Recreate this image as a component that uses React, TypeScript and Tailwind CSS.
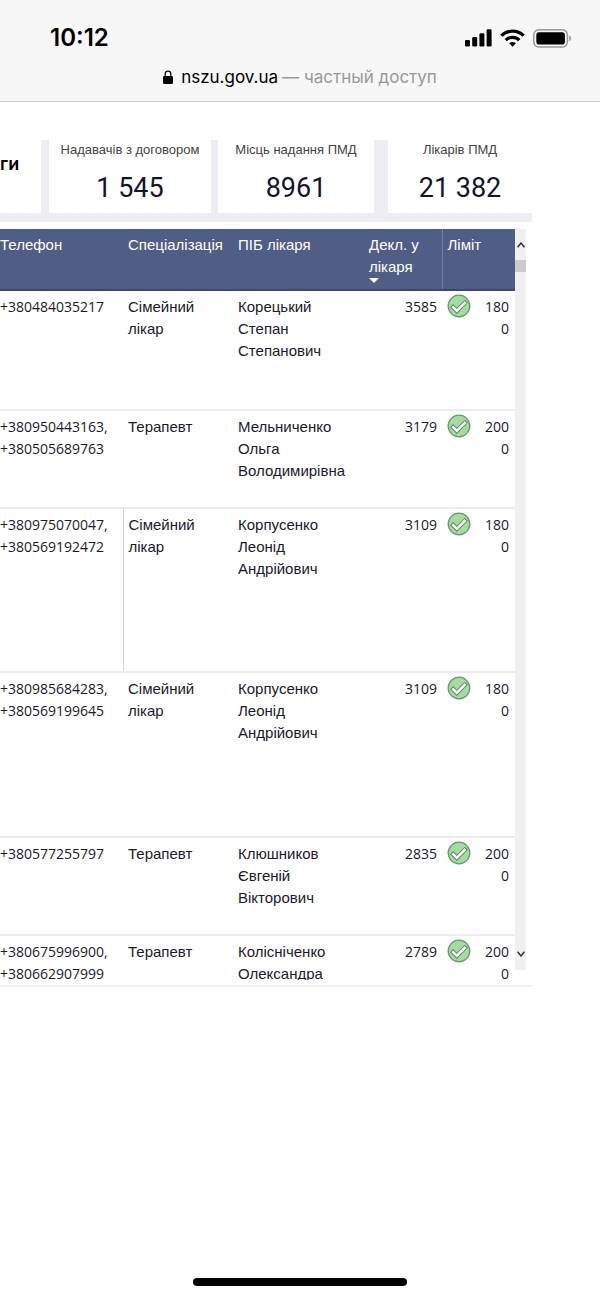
import { clsx } from 'clsx'

const STATS = [
  { label: 'Надавачів з договором', value: '1 545', width: 'w-[162px]', gap: 'mr-[7px]' },
  { label: 'Місць надання ПМД', value: '8961', width: 'w-[156px]', gap: 'mr-[14px]' },
  { label: 'Лікарів ПМД', value: '21 382', width: 'flex-1', gap: '' }
]

const DOCTORS = [
  { phones: ['+380484035217'], spec: 'Сімейний лікар', name: ['Корецький', 'Степан', 'Степанович'], count: 3585, limit: 1800, height: 'h-[120px]' },
  { phones: ['+380950443163,', '+380505689763'], spec: 'Терапевт', name: ['Мельниченко', 'Ольга', 'Володимирівна'], count: 3179, limit: 2000, height: 'h-[98px]' },
  { phones: ['+380975070047,', '+380569192472'], spec: 'Сімейний лікар', name: ['Корпусенко', 'Леонід', 'Андрійович'], count: 3109, limit: 1800, height: 'h-[164px]', divided: true },
  { phones: ['+380985684283,', '+380569199645'], spec: 'Сімейний лікар', name: ['Корпусенко', 'Леонід', 'Андрійович'], count: 3109, limit: 1800, height: 'h-[165px]' },
  { phones: ['+380577255797'], spec: 'Терапевт', name: ['Клюшников', 'Євгеній', 'Вікторович'], count: 2835, limit: 2000, height: 'h-[98px]' },
  { phones: ['+380675996900,', '+380662907999'], spec: 'Терапевт', name: ['Колісніченко', 'Олександра'], count: 2789, limit: 2000, height: 'h-[98px]' }
]

function CheckBadge() {
  return (
    <svg viewBox="0 0 24 24" className="w-6 h-6 shrink-0 -mt-0.5" aria-hidden="true">
      <circle cx="12" cy="12" r="10.8" fill="#a5dba3" stroke="#659b67" strokeWidth="1.3" />
      <path d="M4.6 11.6l5.2 5.2 9.6-9.6" fill="none" stroke="#568b5a" strokeWidth="4.4" />
      <path d="M5.4 12.4l4.4 4.4 8.8-8.8" fill="none" stroke="#fff" strokeWidth="2.5" />
    </svg>
  )
}

function StatusIcons() {
  return (
    <div className="flex items-center gap-2">
      <svg viewBox="0 0 27 18" className="w-[27px] h-[18px]">
        <rect x="0" y="11" width="5" height="6.5" rx="1.3" />
        <rect x="7.2" y="8" width="5" height="9.5" rx="1.3" />
        <rect x="14.4" y="4.2" width="5" height="13.3" rx="1.3" />
        <rect x="21.6" y="0.2" width="5" height="17.3" rx="1.3" />
      </svg>
      <svg viewBox="0 0 25 18" className="w-[25px] h-[18px]" fill="none" stroke="#000" strokeWidth="3.2">
        <path d="M1.4 6.7a16 16 0 0 1 22.2 0" />
        <path d="M5.7 11.1a9.8 9.8 0 0 1 13.6 0" />
        <path d="M12.5 17.8l-3.4-3.5a4.9 4.9 0 0 1 6.8 0z" fill="#000" stroke="none" />
      </svg>
      <svg viewBox="0 0 39 19" className="w-[39px] h-[19px]">
        <rect x="0.8" y="0.8" width="33.6" height="17.2" rx="5" fill="none" stroke="#999" strokeWidth="1.5" />
        <rect x="3.3" y="3.2" width="28.6" height="12.4" rx="2.8" />
        <path d="M36.2 6.6c2.6.8 2.6 4.8 0 5.6z" fill="#999" />
      </svg>
    </div>
  )
}

export default function App() {
  return (
    <div className="min-h-screen flex flex-col bg-white overflow-hidden font-['Liberation_Sans',sans-serif] text-[#1a1a2b]">
      {/* Phone status bar and address */}
      <header className="bg-[#f7f7f7] border-b border-[#cfcfcf] text-black">
        <div className="h-16 pt-3 pl-[50px] pr-7 flex items-center justify-between">
          <span className="font-['Inter',sans-serif] text-[24px] leading-8 font-semibold">10:12</span>
          <StatusIcons />
        </div>
        <a href="#" className="h-[37px] pb-3 flex items-center justify-center font-['Inter',sans-serif] text-[17px] leading-6">
          <svg viewBox="0 0 10 14" className="w-[10px] h-[14px] mr-2">
            <path d="M2.2 7V4a2.8 2.8 0 0 1 5.6 0v3" fill="none" stroke="#000" strokeWidth="1.3" />
            <rect y="6" width="10" height="8" rx="1.2" />
          </svg>
          nszu.gov.ua
          <span className="ml-1 text-[#999]">— частный доступ</span>
        </a>
      </header>

      <main className="mt-[38px] mr-[68px] border-b-2 border-[#f0f0f0] pb-[5px]">
        {/* Totals */}
        <section className="bg-[#ededf3] h-[82px] pb-[9px] flex">
          <div className="w-[41px] mr-2 bg-white pt-3 font-['Inter',sans-serif] text-[18px] leading-6 font-semibold text-black">ги</div>
          {STATS.map((stat) => (
            <div key={stat.label} className={clsx('bg-white text-center whitespace-nowrap', stat.width, stat.gap)}>
              <div className="text-[13px] leading-5 text-[#444]">{stat.label}</div>
              <div className="mt-3 font-['Roboto',sans-serif] text-[27px] leading-8 text-[#14142b]">{stat.value}</div>
            </div>
          ))}
        </section>

        {/* Doctors */}
        <section className="mt-[7px] mr-[6px] flex h-[751px]">
          <div className="flex-1 overflow-hidden">
            <table className="w-full table-fixed border-collapse text-[15px] leading-[22px]">
              <thead className="bg-[#505d86] text-white text-left align-top">
                <tr className="h-[61px] border-b-2 border-[#3f466b] align-top">
                  <th className="w-[123px] pt-[5px] font-normal">Телефон</th>
                  <th className="w-[110px] pt-[5px] pl-[5px] font-normal">Спеціалізація</th>
                  <th className="pt-[5px] pl-[5px] font-normal">ПІБ лікаря</th>
                  <th className="w-[78px] pt-[5px] pl-[5px] font-normal border-r border-r-[#7680a3]">
                    Декл. у лікаря
                    <svg viewBox="0 0 10 5" className="w-[10px] h-[5px]" fill="#fff">
                      <path d="M0 0h10L5 5z" />
                    </svg>
                  </th>
                  <th className="w-[73px] pt-[5px] pl-[5px] font-normal">Ліміт</th>
                </tr>
              </thead>
              <tbody>
                {DOCTORS.map((doctor) => (
                  <tr key={doctor.phones[0]} className={clsx('border-b-2 border-[#ececec] align-top', doctor.height)}>
                    <td className={clsx("pt-[5px] font-['Open_Sans',sans-serif] text-[14px]", doctor.divided && 'border-r border-r-[#d4d4d8]')}>
                      {doctor.phones.map((phone) => (
                        <div key={phone}>{phone}</div>
                      ))}
                    </td>
                    <td className="pt-[5px] pl-[5px] pr-6">{doctor.spec}</td>
                    <td className="pt-[5px] pl-[5px]">
                      {doctor.name.map((part) => (
                        <div key={part}>{part}</div>
                      ))}
                    </td>
                    <td className="pt-[5px] pr-[5px] text-right font-['Open_Sans',sans-serif] text-[14px]">{doctor.count}</td>
                    <td className="pt-[5px] pl-[5px] pr-[6px] font-['Open_Sans',sans-serif] text-[14px]">
                      <div className="flex justify-between">
                        <CheckBadge />
                        <span className="w-7 text-right break-all">{doctor.limit}</span>
                      </div>
                    </td>
                  </tr>
                ))}
              </tbody>
            </table>
          </div>
          <div className="w-[11px] mb-[10px] bg-[#f0f0f0] flex flex-col">
            <button type="button" aria-label="Вгору" className="h-[31px] shrink-0 flex items-center justify-center">
              <svg viewBox="0 0 8 6" className="w-2 h-1.5" fill="none" stroke="#333" strokeWidth="1.5">
                <path d="M0.6 5.2L4 1l3.4 4.2" />
              </svg>
            </button>
            <div className="h-3 bg-[#cbcbcb]" />
            <button type="button" aria-label="Вниз" className="h-8 mt-auto shrink-0 flex items-center justify-center">
              <svg viewBox="0 0 8 6" className="w-2 h-1.5" fill="none" stroke="#333" strokeWidth="1.5">
                <path d="M0.6 0.8L4 5l3.4-4.2" />
              </svg>
            </button>
          </div>
        </section>
      </main>

      {/* Home indicator */}
      <div className="mt-auto mb-[11px] mx-auto w-[214px] h-2 rounded-full bg-black" />
    </div>
  )
}
